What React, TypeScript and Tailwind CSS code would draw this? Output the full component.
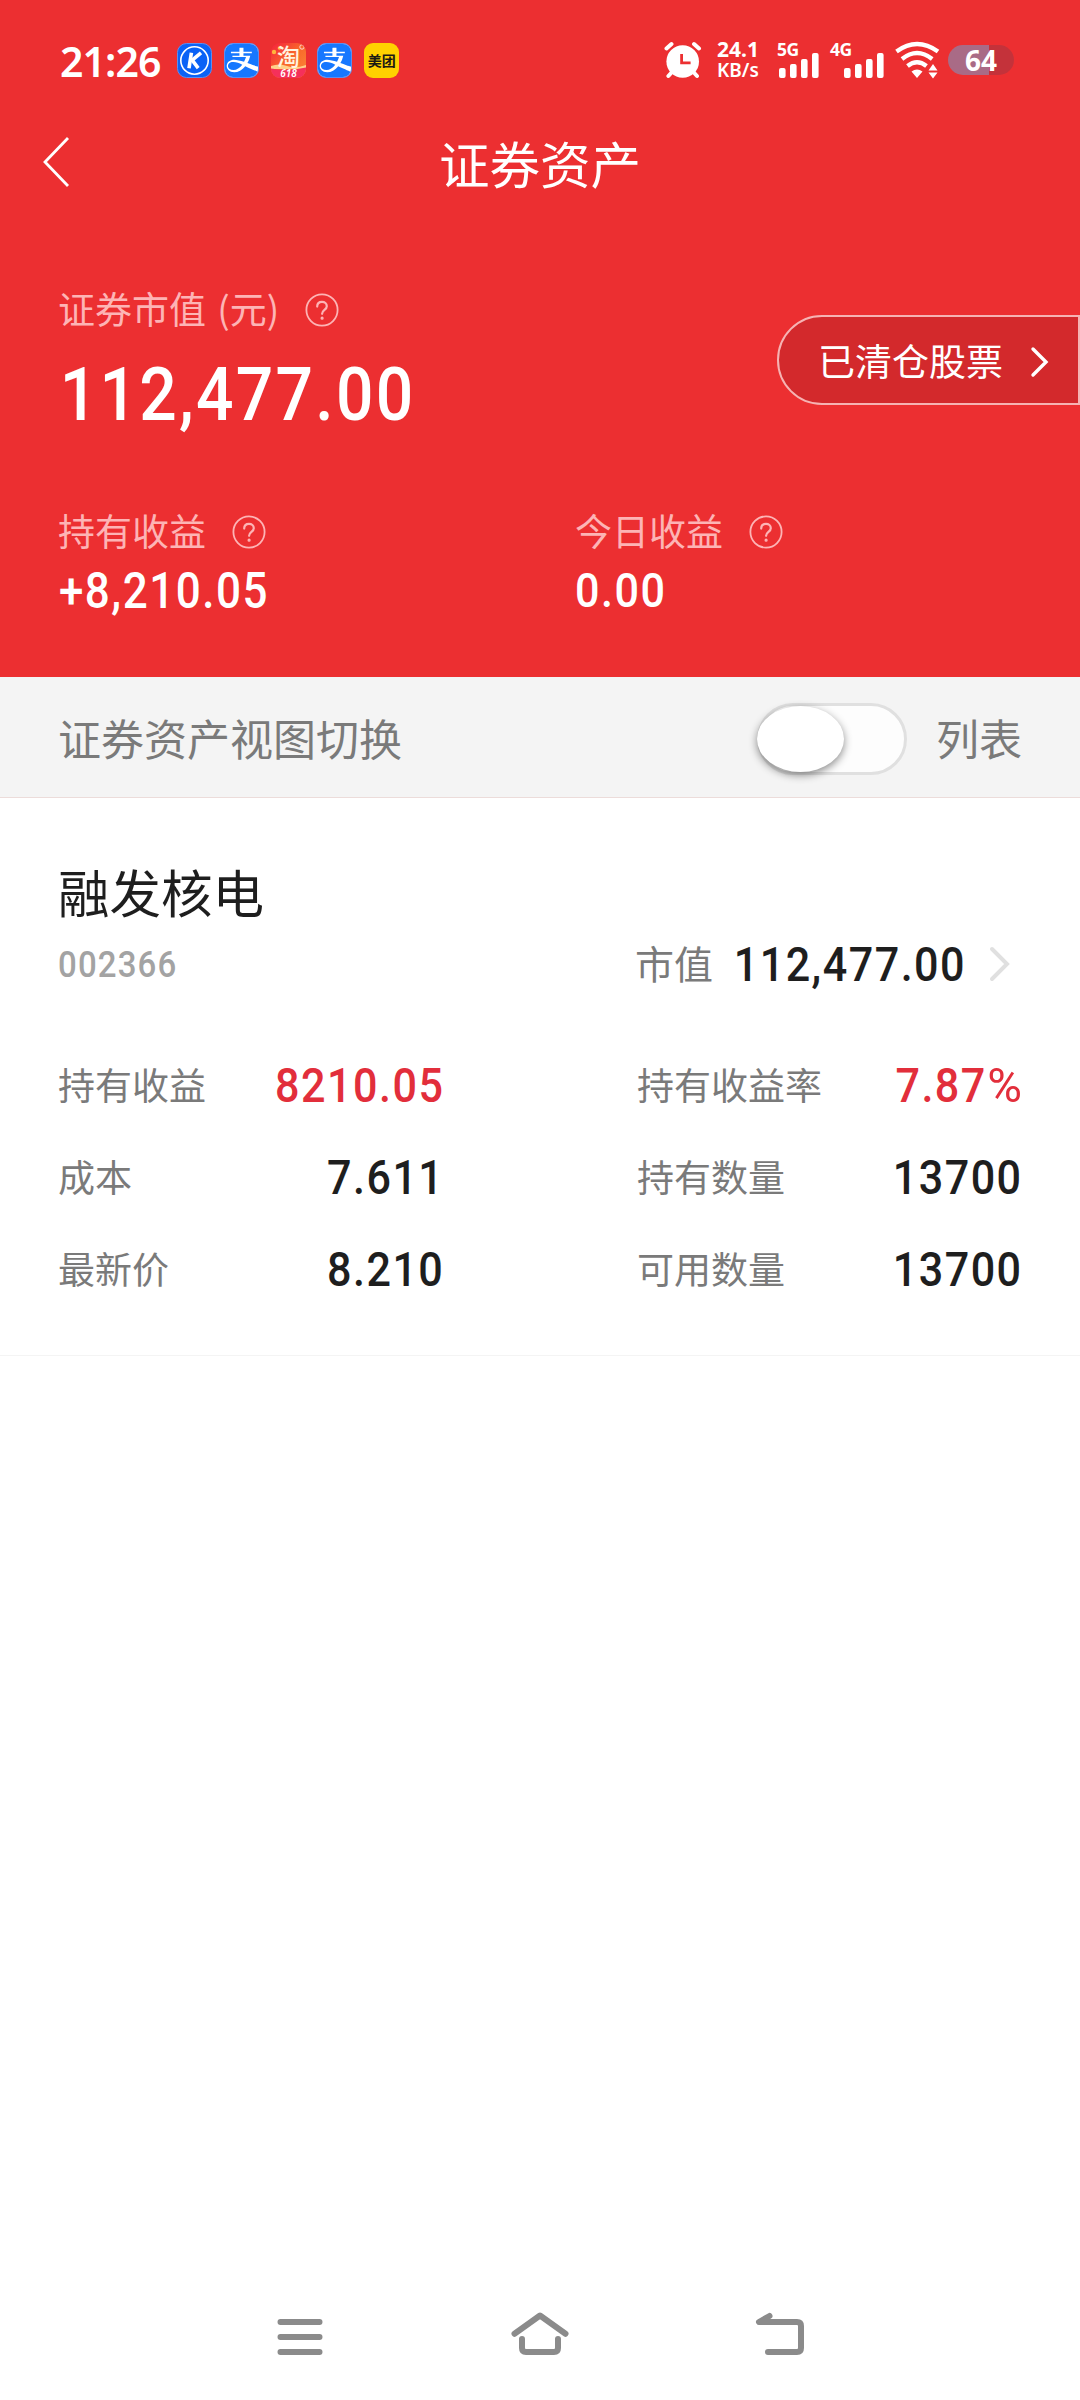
import React from 'react';
import { SiAlipay } from 'react-icons/si';

interface Field {
  label: string;
  value: string;
  unit?: string;
  highlight?: boolean;
}

const leftFields: Field[] = [
  { label: '持有收益', value: '8210.05', highlight: true },
  { label: '成本', value: '7.611' },
  { label: '最新价', value: '8.210' },
];

const rightFields: Field[] = [
  { label: '持有收益率', value: '7.87', unit: '%', highlight: true },
  { label: '持有数量', value: '13700' },
  { label: '可用数量', value: '13700' },
];

/** Narrow figures used for every amount on the page */
const Amount: React.FC<{ children: React.ReactNode; className?: string }> = ({ children, className = '' }) => (
  <span className={`inline-block whitespace-nowrap font-['Roboto',sans-serif] font-medium scale-x-[0.88] tracking-[0.034em] ${className}`}>
    {children}
  </span>
);

const HelpIcon: React.FC = () => (
  <svg className="h-[34px] w-[34px]" viewBox="0 0 34 34" fill="none" stroke="#fdb4b5" strokeWidth="1.8" strokeLinecap="round">
    <circle cx="17" cy="17" r="15.6" />
    <path d="M12.2 13.6c0-3 2.1-4.700 4.800-4.700s4.800 1.700 4.800 4.300c0 3.600-4.700 3.900-4.700 7.600" strokeWidth="2.2" />
    <circle cx="17.1" cy="25.2" r="0.7" fill="#fdb4b5" />
  </svg>
);

const AlipayIcon: React.FC = () => (
  <span className="flex h-[35px] w-[35px] items-center justify-center overflow-hidden rounded-[9px] border border-[#5c8df0] bg-white">
    <SiAlipay className="h-[35px] w-[35px] shrink-0 text-[#1677ff]" />
  </span>
);

const Signal: React.FC<{ label: string; offset: number }> = ({ label, offset }) => (
  <svg className="overflow-visible" width={offset + 41} height="38" viewBox={`0 0 ${offset + 41} 38`} fill="#fff">
    <text x="0" y="15" fontFamily="Noto Sans" fontWeight="700" fontSize="17.5" letterSpacing="-0.5">
      {label}
    </text>
    <rect x={offset} y="27" width="6.6" height="10" rx="2" />
    <rect x={offset + 11} y="23" width="6.6" height="14" rx="2" />
    <rect x={offset + 22} y="18" width="6.6" height="19" rx="2" />
    <rect x={offset + 33} y="12" width="6.6" height="25" rx="2" />
  </svg>
);

const StatusBar: React.FC = () => (
  <div className="flex h-[120px] items-center pr-[66px] pl-[60px] font-['Noto_Sans',sans-serif] text-white">
    <span className="w-[117px] pt-[2px] text-[41px] leading-[60px] font-semibold tracking-[-0.9px]">21:26</span>
    <div className="flex items-center gap-[11.8px]">
      <svg width="35" height="35" viewBox="0 0 35 35">
        <rect x="0.5" y="0.5" width="34" height="34" rx="9" fill="#0b62f6" stroke="#5c8df0" />
        <circle cx="17.5" cy="17.5" r="13.7" fill="none" stroke="#fff" strokeWidth="1.6" />
        <g fill="none" stroke="#fff" strokeWidth="3.6">
          <path d="M14.400 9.800l-2.400 15.400" />
          <path d="M24 9.800l-8.800 7.400 6 8" strokeLinejoin="round" />
        </g>
      </svg>
      <AlipayIcon />
      <svg className="overflow-visible" width="35" height="35" viewBox="0 0 35 35">
        <defs>
          <clipPath id="tb">
            <rect width="35" height="35" rx="9" />
          </clipPath>
          <linearGradient id="tbg" x1="0" y1="0" x2="1" y2="1">
            <stop offset="0" stopColor="#f5203e" />
            <stop offset="0.5" stopColor="#f9692a" />
            <stop offset="1" stopColor="#fb8a3a" />
          </linearGradient>
        </defs>
        <g clipPath="url(#tb)">
          <rect width="35" height="35" fill="url(#tbg)" />
          <path d="M0 23q8-3 16 0t19-1v4H0z" fill="#ffd08a" />
          <path d="M0 25.500q17 3 35-1V35H0z" fill="#f5305a" />
          <circle cx="3" cy="9" r="2.2" fill="#ffb43c" />
          <circle cx="8.5" cy="5" r="1.8" fill="#ffc24d" />
          <circle cx="31" cy="4" r="2.2" fill="none" stroke="#ffd5d5" />
        </g>
        <text x="17.5" y="21.5" textAnchor="middle" fontFamily="Noto Sans CJK SC" fontWeight="500" fontSize="23" fill="#fff3e0">
          淘
        </text>
        <text x="17.5" y="34" textAnchor="middle" fontFamily="Noto Sans" fontStyle="italic" fontWeight="600" fontSize="10" fill="#fff">
          618
        </text>
      </svg>
      <AlipayIcon />
      <span className="flex h-[35px] w-[35px] items-center justify-center rounded-[9px] bg-[#ffd100] font-['Noto_Sans_CJK_SC',sans-serif] text-[14px] leading-none font-bold text-[#1b1a14]">
        美团
      </span>
    </div>

    <div className="ml-auto flex items-center">
      <svg width="38" height="38" viewBox="0 0 38 38">
        <circle cx="18.7" cy="20.5" r="16.3" fill="#fff" />
        <g stroke="#fff" strokeWidth="4" strokeLinecap="round">
          <path d="M2.500 7.500l5-4.500M35 7.500l-5-4.500M8 31l-3.600 4M29.400 31l3.600 4" />
        </g>
        <path d="M17.600 13v8.800h9" fill="none" stroke="#ec2f31" strokeWidth="2.8" />
      </svg>
      <div className="ml-[15px] flex w-[60px] flex-col font-bold">
        <span className="text-[21px] leading-[21px]">24.1</span>
        <span className="text-[19px] leading-[21px] font-semibold">KB/s</span>
      </div>
      <Signal label="5G" offset={2} />
      <span className="w-[10px]" />
      <Signal label="4G" offset={14} />
      <svg className="ml-[10px]" width="45" height="38" viewBox="0 0 45 38" fill="none" stroke="#fff" strokeWidth="4.3">
        <path d="M1.500 10.500Q22 -4.500 43 10.500" />
        <path d="M7 18Q22 6 37.200 18" />
        <path d="M12.500 25Q22 17.500 31.500 25" />
        <path d="M16.500 30.500q5.500-3.800 11 0L22 37z" fill="#fff" stroke="none" />
        <path d="M33.500 29.500l4.500-6.500 4.500 6.500zM33.500 31.500l4.500 6 4.500-6z" fill="#fff" stroke="none" />
      </svg>
      <div className="ml-[8px] flex h-[30px] w-[66px] items-center justify-center rounded-full bg-linear-to-r from-[#a96b86] from-62% to-[#c4323a] to-62% text-[28px] leading-none font-bold">
        64
      </div>
    </div>
  </div>
);

const FieldColumn: React.FC<{ fields: Field[]; className: string }> = ({ fields, className }) => (
  <div className={className}>
    {fields.map((field) => (
      <div key={field.label} className="flex h-[92px] items-center justify-between">
        <span className="text-[37px] leading-[60px] text-[#7a7a7a]">{field.label}</span>
        <Amount className={`-mr-[1px] origin-right pt-[4px] text-[49px] leading-[60px] ${field.highlight ? 'text-[#e22e3b]' : 'text-[#1e1e1e]'}`}>
          {field.value}
          {field.unit && <span className="inline-block origin-right scale-x-[1.1] pl-[4px] font-normal">{field.unit}</span>}
        </Amount>
      </div>
    ))}
  </div>
);

const App: React.FC = () => {
  return (
    <div className="flex h-[2400px] w-[1080px] flex-col overflow-hidden bg-white font-['Noto_Sans_CJK_SC',sans-serif]">
      {/* Red header */}
      <header className="h-[677px] bg-[#ec2f31] text-white">
        <StatusBar />

        <div className="grid h-[84px] grid-cols-[120px_1fr_120px] items-center">
          <svg className="ml-[42px]" width="28" height="50" viewBox="0 0 28 50" fill="none" stroke="#fff" strokeWidth="2.8">
            <path d="M26 1L3 25l23 24" />
          </svg>
          <h1 className="text-center text-[50.5px] leading-[82px]">证券资产</h1>
        </div>

        <section className="flex items-start justify-between pt-[82px] pl-[58px]">
          <div>
            <div className="flex h-[44px] items-center">
              <span className="w-[247px] text-[37px] leading-[44px] whitespace-nowrap text-[#fdb4b5] [word-spacing:3px]">证券市值 (元)</span>
              <span className="pt-1"><HelpIcon /></span>
            </div>
            <Amount className="mt-[19px] origin-left pl-[2px] text-[75px] leading-[90px]">112,477.00</Amount>
          </div>
          <button className="mt-[29px] flex h-[90px] w-[303px] items-center rounded-l-full border-2 border-[#f6b3b3] bg-[#d3292c] pl-[39px]">
            <span className="text-[37px] leading-[60px]">已清仓股票</span>
            <svg className="mt-[3px] ml-[27px]" width="20" height="32" viewBox="0 0 20 32" fill="none" stroke="#fff" strokeWidth="3.4" strokeLinecap="round">
              <path d="M3 3l13 13L3 29" />
            </svg>
          </button>
        </section>

        <section className="mt-[69px] grid grid-cols-[517px_1fr] pl-[58px]">
          <div>
            <div className="flex h-[44px] items-center">
              <span className="w-[174px] text-[37px] leading-[44px] text-[#fdb4b5]">持有收益</span>
              <span className="pt-1"><HelpIcon /></span>
            </div>
            <Amount className="mt-[9px] origin-left pl-[1px] text-[50px] leading-[60px]">+8,210.05</Amount>
          </div>
          <div>
            <div className="flex h-[44px] items-center">
              <span className="w-[174px] text-[37px] leading-[44px] text-[#fdb4b5]">今日收益</span>
              <span className="pt-1"><HelpIcon /></span>
            </div>
            <Amount className="mt-[9px] origin-left text-[49px] leading-[60px]">0.00</Amount>
          </div>
        </section>
      </header>

      {/* View switch */}
      <div className="flex h-[121px] items-center border-b border-[#ecdcda] bg-[#f4f4f4] pr-[58px] pl-[58px] text-[43px] leading-[60px] text-[#7a7a7a]">
        <span className="-mt-[1px]">证券资产视图切换</span>
        <div className="ml-auto mt-[3px] flex h-[72px] w-[150px] items-center rounded-full border-[3px] border-[#e0e0e0] bg-[#fdfdfd]">
          <span className="-ml-[3px] h-[66px] w-[87px] shrink-0 rounded-[50%] bg-white shadow-[0_3px_8px_rgba(0,0,0,0.45)]" />
        </div>
        <span className="-mt-[1px] ml-[29px]">列表</span>
      </div>

      {/* Holding */}
      <section className="h-[558px] border-b border-[#f4f4f4] pt-[61px] pr-[58px] pl-[58px]">
        <h2 className="text-[51.5px] leading-[64px] text-[#1e1e1e]">融发核电</h2>
        <div className="mt-[1px] flex h-[80px] items-center">
          <Amount className="origin-left text-[37.5px] leading-[60px] text-[#a3a3a3]">002366</Amount>
          <div className="ml-auto flex items-center">
            <span className="-mt-[4px] text-[39px] leading-[60px] text-[#7a7a7a]">市值</span>
            <Amount className="-mr-[2px] -ml-[11px] origin-right pt-[1px] text-[49px] leading-[60px] text-[#1e1e1e]">112,477.00</Amount>
            <svg className="mr-[10px] ml-[24px]" width="24" height="36" viewBox="0 0 24 36" fill="none" stroke="#e0e0e0" strokeWidth="4" strokeLinecap="round">
              <path d="M4 3l15 15L4 33" />
            </svg>
          </div>
        </div>
        <div className="mt-[34px] flex justify-between">
          <FieldColumn fields={leftFields} className="w-[385px]" />
          <FieldColumn fields={rightFields} className="w-[385px]" />
        </div>
      </section>

      {/* System navigation */}
      <nav className="mt-auto flex h-[130px] items-center justify-between pr-[270px] pl-[270px]">
        <svg width="60" height="60" viewBox="0 0 60 60" fill="none" stroke="#8b8b8b" strokeWidth="6" strokeLinecap="round">
          <path d="M10.500 17h39M10.500 32h39M10.500 47h39" />
        </svg>
        <svg width="60" height="60" viewBox="0 0 60 60" fill="none" stroke="#8b8b8b" strokeWidth="6" strokeLinecap="round" strokeLinejoin="round">
          <path d="M4.500 28.800L30 10.500l25.500 18.300" />
          <path d="M12 34v9q0 4 4 4h28q4 0 4-4v-9" />
        </svg>
        <svg width="60" height="60" viewBox="0 0 60 60" fill="none" stroke="#8b8b8b" strokeWidth="6" strokeLinecap="round" strokeLinejoin="round">
          <path d="M19.500 11L9 17h38q4 0 4 4v22q0 4-4 4H18" />
        </svg>
      </nav>
    </div>
  );
};

export default App;
